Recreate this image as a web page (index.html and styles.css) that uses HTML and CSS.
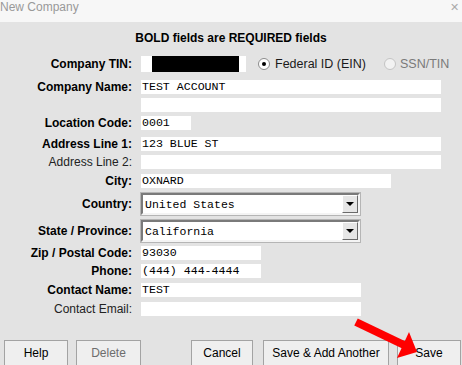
FILE: index.html
```html
<!DOCTYPE html>
<html>
<head>
  <meta charset="UTF-8">
  <title>New Company</title>
  <link rel="stylesheet" href="styles.css">
</head>
<body>

  <div class="titlebar">
    <span class="title">New Company</span>
    <span class="close">&#x2715;</span>
  </div>

  <div class="panel">
    <h2>BOLD fields are REQUIRED fields</h2>

    <div class="form">
      <div class="row tin">
        <label>Company TIN:</label>
        <div class="field">
          <div class="inp w105"><span class="blackout"></span></div>
          <span class="radio on"></span><span class="rtext">Federal ID (EIN)</span>
          <span class="radio off"></span><span class="rtext dis">SSN/TIN</span>
        </div>
      </div>
      <div class="row mt8">
        <label>Company Name:</label>
        <div class="field"><div class="inp w300">TEST ACCOUNT</div></div>
      </div>
      <div class="row">
        <label></label>
        <div class="field"><div class="inp w300"></div></div>
      </div>
      <div class="row">
        <label>Location Code:</label>
        <div class="field"><div class="inp w50">0001</div></div>
      </div>
      <div class="row mt7">
        <label>Address Line 1:</label>
        <div class="field"><div class="inp w300">123 BLUE ST</div></div>
      </div>
      <div class="row">
        <label class="opt">Address Line 2:</label>
        <div class="field"><div class="inp w300"></div></div>
      </div>
      <div class="row mt5">
        <label>City:</label>
        <div class="field"><div class="inp w250">OXNARD</div></div>
      </div>
      <div class="row sel mt5">
        <label>Country:</label>
        <div class="field">
          <div class="combo"><span class="val">United States</span><span class="drop"></span></div>
        </div>
      </div>
      <div class="row sel mt5">
        <label>State / Province:</label>
        <div class="field">
          <div class="combo"><span class="val">California</span><span class="drop"></span></div>
        </div>
      </div>
      <div class="row">
        <label>Zip / Postal Code:</label>
        <div class="field"><div class="inp w120">93030</div></div>
      </div>
      <div class="row">
        <label>Phone:</label>
        <div class="field"><div class="inp w120">(444) 444-4444</div></div>
      </div>
      <div class="row mt5">
        <label>Contact Name:</label>
        <div class="field"><div class="inp w220">TEST</div></div>
      </div>
      <div class="row mt5">
        <label class="opt">Contact Email:</label>
        <div class="field"><div class="inp w220"></div></div>
      </div>
    </div>

    <div class="buttons">
      <button class="b64">Help</button>
      <button class="b65 dis">Delete</button>
      <button class="b62 push">Cancel</button>
      <button class="b126">Save &amp; Add Another</button>
      <button class="b64">Save</button>
    </div>
  </div>

  <svg class="arrow" width="462" height="365" viewBox="0 0 462 365">
    <line x1="356" y1="322" x2="404" y2="345" stroke="#ff0000" stroke-width="8"/>
    <polygon points="409,332 417,352 397,358" fill="#ff0000"/>
  </svg>

</body>
</html>
```

FILE: styles.css
```css
body {
  margin: 0;
  width: 462px;
  height: 365px;
  overflow: hidden;
  background-color: #e3e3e3;
  font-family: "Liberation Sans", Arial, sans-serif;
  font-size: 12px;
  color: #111;
  position: relative;
}
.titlebar {
  height: 22px;
  background-color: #f7f7f7;
  display: flex;
  justify-content: space-between;
  align-items: flex-start;
}
.title {
  font-size: 12px;
  color: #999;
  line-height: 14px;
}
.close {
  font-size: 11px;
  color: #aaa;
  margin-right: 3px;
  line-height: 14px;
}
.panel {
  padding-top: 9px;
}
h2 {
  font-size: 12px;
  font-weight: bold;
  text-align: center;
  margin: 0;
  height: 15px;
  line-height: 15px;
  color: #000;
}
.form {
  margin-top: 10px;
  display: flex;
  flex-direction: column;
  gap: 4px;
}
.row {
  display: flex;
  align-items: center;
  height: 14px;
}
.row.tin { height: 16px; }
.row.sel { height: 22px; }
.mt5 { margin-top: 1px; }
.mt7 { margin-top: 3px; }
.mt8 { margin-top: 4px; }
.row label {
  width: 132px;
  text-align: right;
  font-weight: bold;
  color: #000;
  flex: none;
}
.row label.opt {
  font-weight: normal;
  color: #222;
}
.field {
  margin-left: 9px;
  display: flex;
  align-items: center;
  height: 100%;
}
.inp {
  background: #fff;
  height: 14px;
  line-height: 14px;
  font-family: "Liberation Mono", "Courier New", monospace;
  font-size: 11.6px;
  color: #000;
  padding-left: 1px;
  box-sizing: border-box;
  white-space: pre;
}
.tin .inp { height: 16px; }
.w50 { width: 50px; }
.w105 { width: 105px; }
.w120 { width: 120px; }
.w220 { width: 220px; }
.w250 { width: 250px; }
.w300 { width: 300px; }
.blackout {
  display: block;
  margin-left: 10px;
  width: 87px;
  height: 16px;
  background: #000;
}
.radio {
  width: 12px;
  height: 12px;
  border-radius: 50%;
  box-sizing: border-box;
  border: 1px solid #8c8c8c;
  background: #fff;
  position: relative;
  margin-left: 12px;
  flex: none;
}
.radio.on::after {
  content: "";
  position: absolute;
  left: 3px;
  top: 3px;
  width: 4px;
  height: 4px;
  border-radius: 50%;
  background: #000;
}
.radio.off {
  margin-left: 18px;
  border-color: #c4c4c4;
  background: #f2f2f2;
}
.rtext {
  margin-left: 5px;
  font-size: 12.5px;
  color: #1a1a1a;
}
.rtext.dis { color: #7a7a7a; margin-left: 4px; }
.combo {
  width: 219px;
  height: 22px;
  box-sizing: border-box;
  background: #fff;
  border-top: 2px solid #7a7a7a;
  border-left: 2px solid #7a7a7a;
  border-bottom: 2px solid #f4f4f4;
  border-right: 2px solid #f4f4f4;
  outline: 1px solid #b5b5b5;
  display: flex;
  align-items: center;
  justify-content: space-between;
}
.combo .val {
  font-family: "Liberation Mono", "Courier New", monospace;
  font-size: 11.5px;
  color: #000;
  padding-left: 2px;
}
.drop {
  width: 16px;
  height: 18px;
  box-sizing: border-box;
  background: #e6e6e6;
  border-top: 1px solid #fff;
  border-left: 1px solid #fff;
  border-bottom: 1px solid #6a6a6a;
  border-right: 1px solid #6a6a6a;
  position: relative;
}
.drop::after {
  content: "";
  position: absolute;
  left: 3px;
  top: 6px;
  border-left: 4px solid transparent;
  border-right: 4px solid transparent;
  border-top: 4px solid #000;
}
.buttons {
  display: flex;
  margin-top: 24px;
  padding-left: 4px;
  gap: 8px;
}
button {
  height: 26px;
  box-sizing: border-box;
  background: #efefef;
  border: 1px solid #a3a3a3;
  font-family: "Liberation Sans", Arial, sans-serif;
  font-size: 12px;
  color: #000;
  padding: 0;
}
button.dis { color: #6d6d6d; }
.push { margin-left: 42px; }
button.b126 { margin-left: 2px; }
.b62 { width: 62px; }
.b64 { width: 64px; }
.b65 { width: 65px; }
.b126 { width: 126px; }
.arrow {
  position: absolute;
  top: 0;
  left: 0;
  pointer-events: none;
}
```
